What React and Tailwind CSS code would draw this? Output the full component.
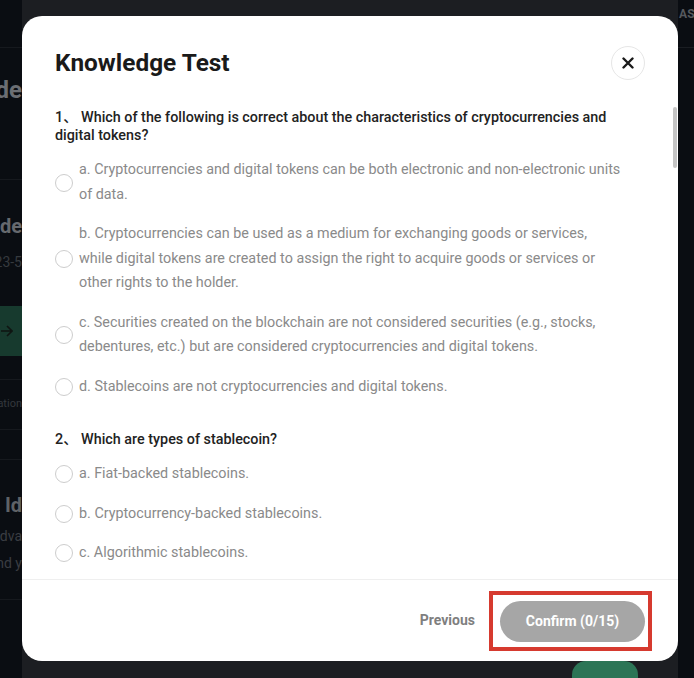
import React from 'react';

const questions = [
  {
    no: '1',
    title: 'Which of the following is correct about the characteristics of cryptocurrencies and digital tokens?',
    options: [
      'a. Cryptocurrencies and digital tokens can be both electronic and non-electronic units of data.',
      'b. Cryptocurrencies can be used as a medium for exchanging goods or services, while digital tokens are created to assign the right to acquire goods or services or other rights to the holder.',
      'c. Securities created on the blockchain are not considered securities (e.g., stocks, debentures, etc.) but are considered cryptocurrencies and digital tokens.',
      'd. Stablecoins are not cryptocurrencies and digital tokens.',
    ],
  },
  {
    no: '2',
    title: 'Which are types of stablecoin?',
    options: [
      'a. Fiat-backed stablecoins.',
      'b. Cryptocurrency-backed stablecoins.',
      'c. Algorithmic stablecoins.',
      'd. Commodity-backed stablecoins.',
    ],
  },
];

const Radio = () => (
  <span className="h-[18px] w-[18px] shrink-0 rounded-full border-[1.5px] border-[#cdcdcd] bg-white" />
);

const Question = ({ q }) => (
  <div>
    <p className="w-[567px] text-[14.35px] font-medium leading-[18px] text-[#222]">
      {q.no}、 {q.title}
    </p>
    <div className="mt-[13px] flex flex-col gap-[15px]">
      {q.options.map((opt) => (
        <label key={opt} className="flex items-center gap-[6px]">
          <Radio />
          <span className="w-[543px] text-[14.35px] leading-[24.5px] text-[#8a8a8a]">{opt}</span>
        </label>
      ))}
    </div>
  </div>
);

// dimmed page that sits behind the dialog
const LeftStrip = () => (
  <div className="flex w-[22px] shrink-0 flex-col overflow-hidden">
    <div className="h-[48px] shrink-0 border-b border-[#16191e]" />
    <div className="flex h-[132px] shrink-0 justify-end border-b border-[#16191e] pt-[24px]">
      <span className="shrink-0 whitespace-nowrap text-[24px] font-bold text-[#6b6e73]">Guide</span>
    </div>
    <div className="flex h-[126px] shrink-0 flex-col items-end pt-[34px]">
      <span className="shrink-0 whitespace-nowrap text-[20px] font-bold leading-6 text-[#66696e]">Guide</span>
      <span className="mt-[14px] shrink-0 whitespace-nowrap text-[14px] text-[#363a3f]">23-5</span>
    </div>
    <div className="flex h-[50px] shrink-0 items-center bg-[#173a2e] pl-[1px]">
      <svg width="12" height="12" viewBox="0 0 12 12" fill="none" stroke="#0f1512" strokeWidth="1.6">
        <path d="M0 6h11M6 1l5 5-5 5" />
      </svg>
    </div>
    <div className="h-[24px] shrink-0 border-b border-[#16191e]" />
    <div className="flex h-[50px] shrink-0 items-center justify-end border-b border-[#16191e]">
      <span className="shrink-0 whitespace-nowrap text-[11px] text-[#34383d]">Verification</span>
    </div>
    <div className="h-[30px] shrink-0 border-b border-[#16191e]" />
    <div className="flex h-[140px] shrink-0 flex-col items-end border-b border-[#16191e] pt-[33px]">
      <span className="shrink-0 whitespace-nowrap text-[20px] font-bold leading-6 text-[#5f6267]">Id</span>
      <span className="mt-[6px] shrink-0 whitespace-nowrap text-[14px] leading-[27px] text-[#3a3d42]">Adva</span>
      <span className="shrink-0 whitespace-nowrap text-[14px] leading-[27px] text-[#3a3d42]">and y</span>
    </div>
  </div>
);

export default function App() {
  return (
    <div className="relative flex h-[678px] w-[694px] overflow-hidden bg-[#0a0d12] font-['Roboto','Noto_Sans_CJK_SC',sans-serif]">
      <LeftStrip />
      <div className="flex-1" />
      <div className="w-[16px] shrink-0">
        <div className="flex h-[48px] items-start overflow-hidden border-b border-[#1a1d22] pt-[5px]">
          <span className="shrink-0 whitespace-nowrap pl-[1px] text-[12px] font-bold tracking-wide text-[#55585d]">ASSET</span>
        </div>
      </div>

      {/* backdrop column with the dialog */}
      <div className="absolute bottom-0 left-[22px] top-0 flex w-[656px] flex-col bg-[#1c1e22]">
        <div className="relative mt-[16px] flex h-[645px] flex-col overflow-hidden rounded-[20px] bg-white">
          <div className="flex items-center justify-between pl-[33px] pr-[33px] pt-[30px]">
            <h2 className="text-[24.4px] font-bold leading-8 text-[#1a1a1a]">Knowledge Test</h2>
            <button className="flex h-[34px] w-[34px] items-center justify-center rounded-full border border-[#e6e6e6]">
              <svg width="12" height="12" viewBox="0 0 12 12" fill="none" stroke="#1a1a1a" strokeWidth="2.4" strokeLinecap="round">
                <path d="M1.5 1.5l9 9M10.5 1.5l-9 9" />
              </svg>
            </button>
          </div>

          <div className="flex-1 overflow-hidden px-[33px] pt-[29px]">
            <div className="flex flex-col gap-[32px]">
              {questions.map((q) => (
                <Question key={q.no} q={q} />
              ))}
            </div>
          </div>

          <div className="absolute right-[1px] top-[91px] h-[61px] w-[4px] rounded-full bg-[#c4c4c4]" />

          <div className="flex h-[82px] shrink-0 items-center justify-end gap-[14px] border-t border-[#efefef] pr-[26px]">
            <button className="text-[14px] font-bold text-[#7f7f7f]">Previous</button>
            <div className="border-4 border-[#d63a2f] pb-[5px] pl-[7px] pr-[3px] pt-[6px]">
              <button className="h-[41px] w-[145px] rounded-full bg-[#a6a6a6] text-[14px] font-bold text-white">
                Confirm (0/15)
              </button>
            </div>
          </div>
        </div>
        <div className="flex flex-1 pl-[550px]">
          <div className="h-full w-[66px] rounded-t-[14px] bg-[#2c7556]" />
        </div>
      </div>
    </div>
  );
}
